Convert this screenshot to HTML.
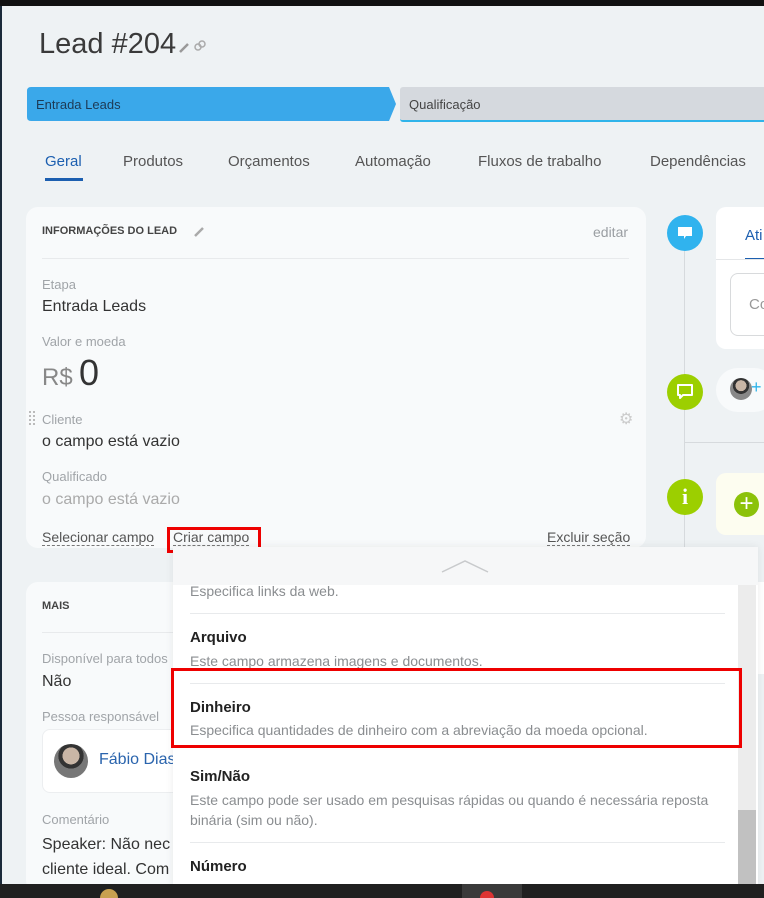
<!DOCTYPE html>
<html><head><meta charset="utf-8"><style>
*{margin:0;padding:0;box-sizing:border-box}
body{width:764px;height:898px;overflow:hidden;background:#eef2f4;font-family:"Liberation Sans",sans-serif;position:relative;color:#333}
.a{position:absolute;white-space:nowrap}
.lbl{font-size:13px;color:#a0a4a8}
.val{font-size:16px;color:#333}
.dash{font-size:14px;color:#555;border-bottom:1px dashed #777;line-height:15px}
.t{font-size:15px;color:#555}
.it{font-size:15px;font-weight:bold;color:#222}
.ds{font-size:14px;color:#8a8d90}
.hr{position:absolute;height:1px;background:#e8eaec}
</style></head><body>
<div class="a" style="left:0;top:0;width:764px;height:6px;background:#111"></div>
<div class="a" style="left:0;top:6px;width:2px;height:880px;background:#1b2a3a"></div>
<div class="a" style="left:39px;top:28px;font-size:29px;color:#3a3a3a">Lead #204</div>
<svg class="a" style="left:178px;top:40px" width="30" height="14"><path d="M2 12 L10 4" stroke="#999" stroke-width="2.5"/><circle cx="20" cy="7" r="3" fill="none" stroke="#aaa" stroke-width="1.5"/><circle cx="24" cy="4" r="3" fill="none" stroke="#aaa" stroke-width="1.5"/></svg>
<svg class="a" style="left:27px;top:87px" width="370" height="35"><path d="M4 0 H362 L369 17 L362 34 H4 Q0 34 0 30 V4 Q0 0 4 0Z" fill="#3aa8ea"/></svg>
<div class="a" style="left:36px;top:97px;font-size:13px;color:#1d3a55">Entrada Leads</div>
<div class="a" style="left:400px;top:87px;width:364px;height:35px;background:#d5d9de;border-bottom:2px solid #2fb4ea;border-radius:3px 0 0 3px"></div>
<div class="a" style="left:409px;top:97px;font-size:13px;color:#444">Qualificação</div>
<div class="a t" style="left:45px;top:153px;color:#1c5fb0">Geral</div>
<div class="a" style="left:45px;top:178px;width:38px;height:3px;background:#1c5fb0"></div>
<div class="a t" style="left:123px;top:153px">Produtos</div>
<div class="a t" style="left:228px;top:153px">Orçamentos</div>
<div class="a t" style="left:355px;top:153px">Automação</div>
<div class="a t" style="left:478px;top:153px">Fluxos de trabalho</div>
<div class="a t" style="left:650px;top:153px">Dependências</div>

<div class="a" style="left:26px;top:207px;width:620px;height:341px;background:#f8fafb;border-radius:12px"></div>
<div class="a" style="left:42px;top:225px;font-size:11px;font-weight:bold;color:#444">INFORMAÇÕES DO LEAD</div>
<svg class="a" style="left:193px;top:226px" width="12" height="12"><path d="M2 10 L10 2" stroke="#aaa" stroke-width="2.5"/></svg>
<div class="a" style="left:593px;top:224px;font-size:14px;color:#9a9ea2">editar</div>
<div class="hr" style="left:42px;top:258px;width:587px"></div>
<div class="a lbl" style="left:42px;top:277px">Etapa</div>
<div class="a val" style="left:42px;top:298px">Entrada Leads</div>
<div class="a lbl" style="left:42px;top:334px">Valor e moeda</div>
<div class="a" style="left:42px;top:364px;font-size:24px;color:#888">R$</div>
<div class="a" style="left:79px;top:352px;font-size:36px;color:#333">0</div>
<svg class="a" style="left:29px;top:411px" width="8" height="16"><g fill="#bbb"><rect x="0" y="0" width="2" height="2"/><rect x="4" y="0" width="2" height="2"/><rect x="0" y="4" width="2" height="2"/><rect x="4" y="4" width="2" height="2"/><rect x="0" y="8" width="2" height="2"/><rect x="4" y="8" width="2" height="2"/><rect x="0" y="12" width="2" height="2"/><rect x="4" y="12" width="2" height="2"/></g></svg>
<div class="a lbl" style="left:42px;top:412px">Cliente</div>
<div class="a" style="left:619px;top:409px;font-size:16px;color:#ccc">⚙</div>
<div class="a val" style="left:42px;top:433px">o campo está vazio</div>
<div class="a lbl" style="left:42px;top:469px">Qualificado</div>
<div class="a val" style="left:42px;top:491px;color:#aaa">o campo está vazio</div>
<div class="a dash" style="left:42px;top:530px">Selecionar campo</div>
<div class="a dash" style="left:173px;top:530px">Criar campo</div>
<div class="a dash" style="left:547px;top:530px">Excluir seção</div>
<div class="a" style="left:167px;top:527px;width:94px;height:26px;border:3px solid #e00"></div>

<div class="a" style="left:26px;top:582px;width:200px;height:310px;background:#f8fafb;border-radius:12px"></div>
<div class="a" style="left:42px;top:600px;font-size:11px;font-weight:bold;color:#444">MAIS</div>
<div class="hr" style="left:42px;top:632px;width:140px"></div>
<div class="a lbl" style="left:42px;top:651px">Disponível para todos</div>
<div class="a val" style="left:42px;top:673px">Não</div>
<div class="a lbl" style="left:42px;top:709px">Pessoa responsável</div>
<div class="a" style="left:42px;top:729px;width:160px;height:64px;background:#fff;border:1px solid #eceef0;border-radius:8px"></div>
<div class="a" style="left:54px;top:744px;width:34px;height:34px;border-radius:50%;background:radial-gradient(circle at 50% 35%,#c9b6a6 0 30%,#333 31% 45%,#777 46%)"></div>
<div class="a" style="left:99px;top:751px;font-size:16px;color:#2a64ad">Fábio Dias</div>
<div class="a lbl" style="left:42px;top:812px">Comentário</div>
<div class="a val" style="left:42px;top:836px">Speaker: Não nec</div>
<div class="a val" style="left:42px;top:861px">cliente ideal. Com</div>

<div class="a" style="left:684px;top:232px;width:1px;height:660px;background:#d6dadd"></div>
<div class="a" style="left:685px;top:442px;width:80px;height:1px;background:#d6dadd"></div>
<div class="a" style="left:716px;top:207px;width:60px;height:142px;background:#fff;border-radius:10px"></div>
<div class="a" style="left:745px;top:227px;font-size:15px;color:#1c5fb0">Ati</div>
<div class="a" style="left:745px;top:258px;width:20px;height:2px;background:#1c5fb0"></div>
<div class="a" style="left:716px;top:259px;width:50px;height:1px;background:#e4e6e8"></div>
<div class="a" style="left:730px;top:273px;width:50px;height:63px;border:1px solid #d8dadc;border-radius:8px"></div>
<div class="a" style="left:749px;top:296px;font-size:15px;color:#999">Co</div>
<div class="a" style="left:667px;top:215px;width:36px;height:36px;border-radius:50%;background:#30b3ee"></div>
<svg class="a" style="left:677px;top:226px" width="16" height="14"><path d="M1 1H15V10H9L7 13V10H1Z" fill="#fff"/></svg>
<div class="a" style="left:716px;top:368px;width:60px;height:44px;background:#f8fafb;border-radius:22px"></div>
<div class="a" style="left:730px;top:378px;width:22px;height:22px;border-radius:50%;background:radial-gradient(circle at 50% 35%,#c9b6a6 0 30%,#333 31% 45%,#888 46%)"></div>
<div class="a" style="left:751px;top:377px;font-size:18px;color:#2fb4ea">+</div>
<div class="a" style="left:667px;top:374px;width:36px;height:36px;border-radius:50%;background:#9ccf00"></div>
<svg class="a" style="left:676px;top:384px" width="18" height="16"><path d="M2 1H16V11H7L4 14V11H2Z" fill="none" stroke="#fff" stroke-width="2" stroke-linejoin="round"/></svg>
<div class="a" style="left:716px;top:473px;width:60px;height:62px;background:#fdfdf0;border-radius:10px"></div>
<div class="a" style="left:734px;top:492px;width:25px;height:25px;border-radius:50%;background:#8cc20a;color:#fff;font-size:24px;line-height:24px;text-align:center">+</div>
<div class="a" style="left:667px;top:479px;width:36px;height:36px;border-radius:50%;background:#9ccf00;color:#fff;font-weight:bold;font-size:22px;text-align:center;line-height:36px;font-family:'Liberation Serif',serif">i</div>
<div class="a" style="left:752px;top:582px;width:20px;height:92px;background:#fff"></div>

<div class="a" style="left:173px;top:547px;width:585px;height:340px;background:#fff;box-shadow:0 0 8px rgba(0,0,0,.08)"></div>
<div class="a" style="left:173px;top:547px;width:585px;height:38px;background:#f6f7f8"></div>
<svg class="a" style="left:441px;top:558px" width="48" height="16"><path d="M1 14 L24 3 L47 14" fill="none" stroke="#c8cacc" stroke-width="1.5"/></svg>
<div class="a" style="left:738px;top:585px;width:18px;height:300px;background:#ececec"></div>
<div class="a" style="left:738px;top:810px;width:18px;height:75px;background:#c1c1c1"></div>
<div class="a ds" style="left:190px;top:583px">Especifica links da web.</div>
<div class="hr" style="left:190px;top:613px;width:535px"></div>
<div class="a it" style="left:190px;top:629px">Arquivo</div>
<div class="a ds" style="left:190px;top:653px">Este campo armazena imagens e documentos.</div>
<div class="hr" style="left:190px;top:683px;width:535px"></div>
<div class="a it" style="left:190px;top:699px">Dinheiro</div>
<div class="a ds" style="left:190px;top:722px">Especifica quantidades de dinheiro com a abreviação da moeda opcional.</div>
<div class="a" style="left:171px;top:668px;width:571px;height:80px;border:3px solid #e00"></div>
<div class="a it" style="left:190px;top:768px">Sim/Não</div>
<div class="a ds" style="left:190px;top:792px">Este campo pode ser usado em pesquisas rápidas ou quando é necessária reposta</div>
<div class="a ds" style="left:190px;top:812px">binária (sim ou não).</div>
<div class="hr" style="left:190px;top:842px;width:535px"></div>
<div class="a it" style="left:190px;top:858px">Número</div>

<div class="a" style="left:0;top:884px;width:764px;height:14px;background:#202020"></div>
<div class="a" style="left:462px;top:884px;width:60px;height:14px;background:#3a3a3a"></div>
<div class="a" style="left:100px;top:889px;width:18px;height:9px;border-radius:9px 9px 0 0;background:#c8a050"></div>
<div class="a" style="left:480px;top:891px;width:14px;height:7px;border-radius:7px 7px 0 0;background:#d33"></div>
</body></html>
